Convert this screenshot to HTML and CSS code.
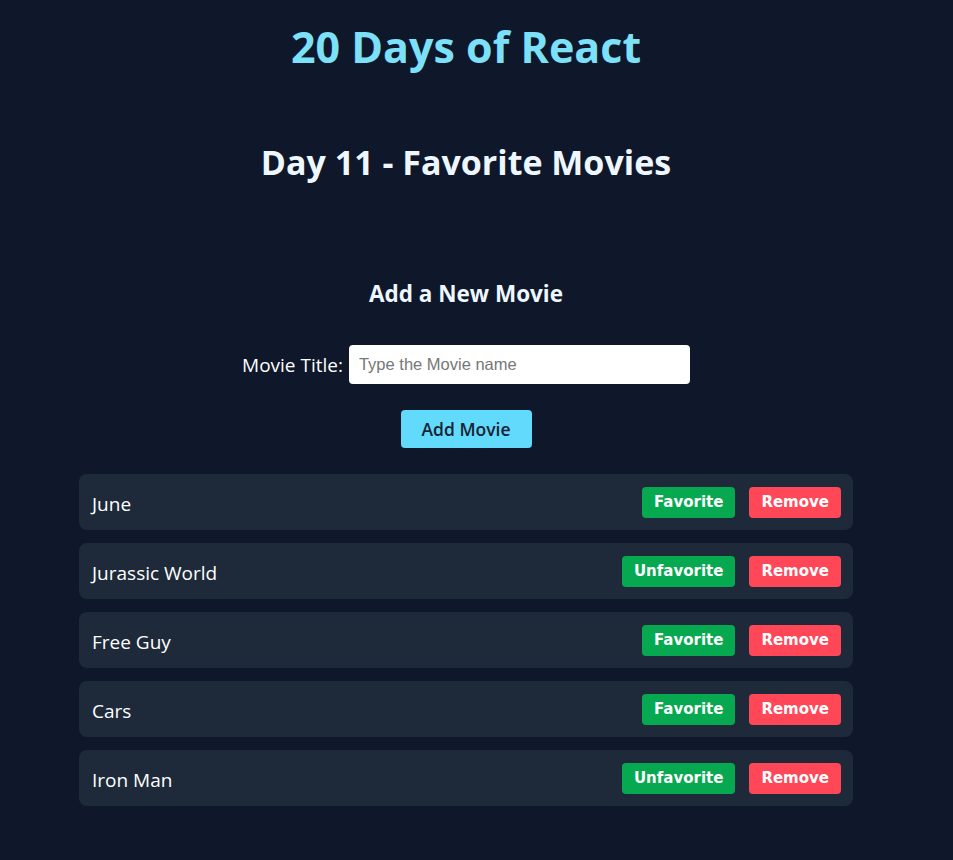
FILE: index.html
```html
<!DOCTYPE html>
<html lang="en">
<head>
<meta charset="utf-8">
<title>20 Days of React</title>
<link rel="stylesheet" href="styles.css">
</head>
<body>
<div class="app">
  <h1 class="title">20 Days of React</h1>
  <h2 class="subtitle">Day 11 - Favorite Movies</h2>
  <section class="add">
    <h3 class="add-heading">Add a New Movie</h3>
    <div class="field">
      <label class="field-label" for="movie">Movie Title:</label>
      <input class="field-input" id="movie" type="text" placeholder="Type the Movie name">
    </div>
    <button class="add-btn">Add Movie</button>
  </section>
  <ul class="movies">
    <li class="movie"><span class="movie-name">June</span><div class="actions"><button class="btn btn-fav">Favorite</button><button class="btn btn-remove">Remove</button></div></li>
    <li class="movie"><span class="movie-name">Jurassic World</span><div class="actions"><button class="btn btn-fav">Unfavorite</button><button class="btn btn-remove">Remove</button></div></li>
    <li class="movie"><span class="movie-name">Free Guy</span><div class="actions"><button class="btn btn-fav">Favorite</button><button class="btn btn-remove">Remove</button></div></li>
    <li class="movie"><span class="movie-name">Cars</span><div class="actions"><button class="btn btn-fav">Favorite</button><button class="btn btn-remove">Remove</button></div></li>
    <li class="movie"><span class="movie-name">Iron Man</span><div class="actions"><button class="btn btn-fav">Unfavorite</button><button class="btn btn-remove">Remove</button></div></li>
  </ul>
</div>
</body>
</html>
```
FILE: styles.css
```css
* { box-sizing: border-box; }
html, body {
  margin: 0;
  padding: 0;
  background: #0f172a;
  height: 100%;
}
body {
  font-family: "Open Sans", "Noto Sans", sans-serif;
  color: #f0f8ff;
}
.app {
  display: flex;
  flex-direction: column;
  align-items: center;
  padding: 20px 21px 0 0;
}
.title {
  margin: 0;
  font-size: 43px;
  line-height: 54px;
  font-weight: 700;
  color: #7ce0f8;
}
.subtitle {
  margin: 66px 0 0;
  font-size: 34px;
  line-height: 44px;
  font-weight: 700;
  color: #eef7ff;
}
.add {
  display: flex;
  flex-direction: column;
  align-items: center;
  margin-top: 95px;
}
.add-heading {
  margin: 0;
  font-size: 22.5px;
  line-height: 30px;
  font-weight: 700;
  color: #eef7ff;
}
.field {
  display: flex;
  align-items: center;
  gap: 6px;
  margin-top: 36px;
}
.field-label {
  font-size: 19px;
  color: #ffffff;
}
.field-input {
  width: 341px;
  height: 39px;
  border: none;
  border-radius: 4px;
  padding: 0 10px;
  font-family: "Liberation Sans", Arial, sans-serif;
  font-size: 16.5px;
  color: #222;
  background: #fff;
  outline: none;
}
.field-input::placeholder { color: #777; }
.add-btn {
  margin-top: 26px;
  width: 131px;
  height: 38px;
  border: none;
  border-radius: 4px;
  background: #61dafb;
  color: #1a2233;
  font-family: "Open Sans", sans-serif;
  font-weight: 600;
  font-size: 17.5px;
  cursor: pointer;
}
.movies {
  list-style: none;
  margin: 26px 0 0;
  padding: 0;
  width: 774px;
  display: flex;
  flex-direction: column;
  gap: 13px;
}
.movie {
  display: flex;
  align-items: center;
  justify-content: space-between;
  height: 56px;
  padding: 0 12px 0 13px;
  background: #1e2a3a;
  border-radius: 8px;
}
.movie-name {
  padding-top: 3px;
  font-size: 19px;
  color: #ffffff;
}
.actions {
  display: flex;
  gap: 14px;
}
.btn {
  height: 31px;
  border: none;
  border-radius: 4px;
  padding: 0 12px;
  font-family: "DejaVu Sans", Verdana, sans-serif;
  font-weight: 700;
  font-size: 15px;
  color: #ffffff;
  cursor: pointer;
}
.btn-fav { background: #06a94f; }
.btn-remove { background: #ff4757; }
```
